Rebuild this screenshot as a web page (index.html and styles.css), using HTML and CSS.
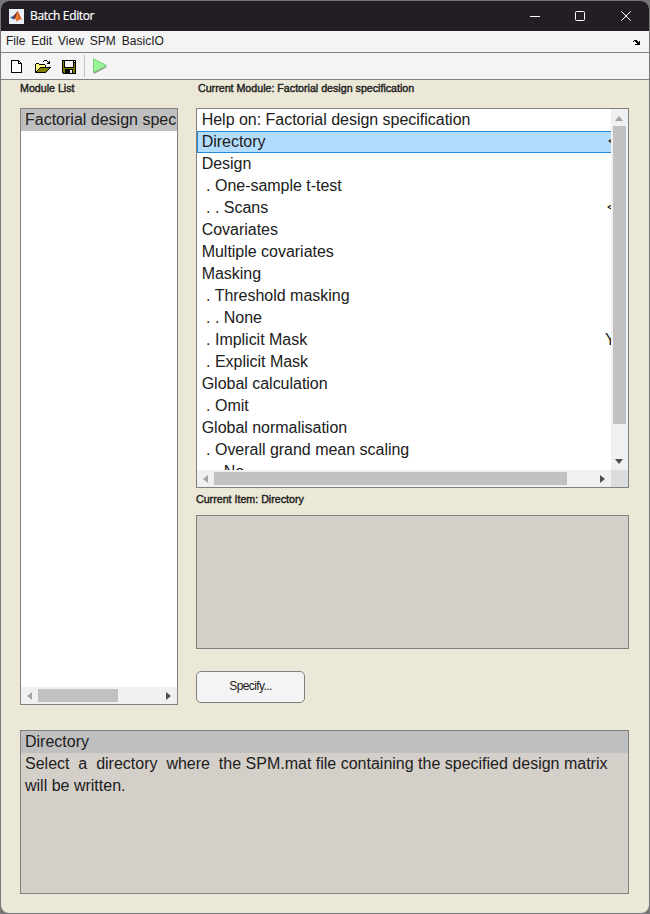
FILE: index.html
```html
<!DOCTYPE html>
<html lang="en">
<head>
<meta charset="utf-8">
<title>Batch Editor</title>
<link rel="stylesheet" href="styles.css">
</head>
<body>
<div class="window">
  <header class="titlebar">
    <svg class="app-icon" width="15" height="15" viewBox="0 0 15 15"><rect width="15" height="15" fill="#e9eff4"/><path d="M1 8.5L5 6.5L7 8L4.5 10.5Z" fill="#34699f"/><path d="M5 6.5L8.5 2L7.5 8L4.5 10.5Z" fill="#762d25"/><path d="M8.5 2C10 3 11 8 13.5 11L11 10L8 12.5L6 9.5Z" fill="#d85d20"/><path d="M8.5 3L9 9L8 12L7.5 9Z" fill="#f1a53a"/></svg>
    <h1 class="title">Batch Editor</h1>
    <div class="controls">
      <svg width="10" height="10" viewBox="0 0 10 10"><path d="M0 5.5H10" stroke="#fff"/></svg>
      <svg class="maximize" width="10" height="10" viewBox="0 0 10 10"><rect x=".5" y=".5" width="9" height="9" rx="1" fill="none" stroke="#fff"/></svg>
      <svg width="10" height="10" viewBox="0 0 10 10"><path d="M.3 .3L9.7 9.7M9.7 .3L.3 9.7" stroke="#fff"/></svg>
    </div>
  </header>
  <nav class="menubar">
    <span>File</span><span>Edit</span><span>View</span><span>SPM</span><span>BasicIO</span>
    <svg class="dock" width="7" height="5" viewBox="0 0 7 5" shape-rendering="crispEdges"><path d="M1 0H4V1H5V2H6V1H7V5H2V4H4V3H3V2H2V1H1V2H0V1H1Z"/></svg>
  </nav>
  <div class="toolbar">
    <svg class="ic-new" width="11" height="13" viewBox="0 0 11 13" shape-rendering="crispEdges"><path d="M0 0H8V1H9V2H10V3H11V13H0Z"/><path d="M1 1H7V4H10V12H1ZM8 2H9V3H8Z" fill="#fff"/></svg>
    <svg class="ic-open" width="16" height="13" viewBox="0 0 16 13" shape-rendering="crispEdges"><path d="M1 4H4V5H10V7H5L1 11Z" fill="#ffff7a"/><path d="M0 4H1V12H0ZM1 3H4V4H1ZM4 4H10V5H4ZM10 5H11V7H10ZM8 1H9V2H8ZM9 0H12V1H9ZM12 1H13V2H12ZM14 1H15V4H12V3H13V2H14Z"/><path d="M5 7H16L11 13H0V12Z"/><path d="M5 8H14L10 12H2Z" fill="#808000"/></svg>
    <svg class="ic-save" width="14" height="14" viewBox="0 0 14 14" shape-rendering="crispEdges"><path d="M0 0H14V14H1V13H0Z"/><path d="M1 1H2V8H12V3H13V13H11V9H3V13H2V12H1Z" fill="#808000"/><path d="M3 1H11V7H3ZM12 1H13V2H12ZM8 10H10V13H8Z" fill="#f4f4f4"/></svg>
    <i class="separator"></i>
    <svg class="ic-run" width="15" height="17" viewBox="0 0 15 17"><path d="M1 1V16L14 9Z" fill="#999b99"/><path d="M.5 .8V14.6L13.5 7.6Z" fill="#98f598" stroke="#78ce78"/></svg>
  </div>
  <main class="workspace">
    <div class="panels">
      <section class="modules">
        <h2>Module List</h2>
        <div class="list module-list">
          <div class="viewport"><div class="row current"><span>Factorial design spec</span></div></div>
          <div class="scroll-x">
            <svg width="5" height="8" viewBox="0 0 5 8"><path d="M5 0V8L0 4Z" fill="#a3a3a3"/></svg>
            <i class="thumb"></i>
            <svg width="5" height="8" viewBox="0 0 5 8"><path d="M0 0V8L5 4Z" fill="#505050"/></svg>
          </div>
        </div>
      </section>
      <section class="details">
        <h2 class="module-heading">Current Module: Factorial design specification</h2>
        <div class="list settings-list">
          <div class="viewport">
            <div class="row"><span>Help on: Factorial design specification</span></div>
            <div class="row selected"><span>Directory</span><b class="value">&lt;-X</b></div>
            <div class="row"><span>Design</span></div>
            <div class="row"><span> . One-sample t-test</span></div>
            <div class="row"><span> . . Scans</span><b class="value scans">&lt;-X</b></div>
            <div class="row"><span>Covariates</span></div>
            <div class="row"><span>Multiple covariates</span></div>
            <div class="row"><span>Masking</span></div>
            <div class="row"><span> . Threshold masking</span></div>
            <div class="row"><span> . . None</span></div>
            <div class="row"><span> . Implicit Mask</span><b class="value yes">Yes</b></div>
            <div class="row"><span> . Explicit Mask</span></div>
            <div class="row"><span>Global calculation</span></div>
            <div class="row"><span> . Omit</span></div>
            <div class="row"><span>Global normalisation</span></div>
            <div class="row"><span> . Overall grand mean scaling</span></div>
            <div class="row"><span> . . No</span></div>
          </div>
          <div class="scroll-y">
            <svg width="8" height="5" viewBox="0 0 8 5"><path d="M0 5H8L4 0Z" fill="#a3a3a3"/></svg>
            <i class="thumb"></i>
            <svg width="8" height="5" viewBox="0 0 8 5"><path d="M0 0H8L4 5Z" fill="#505050"/></svg>
          </div>
          <div class="scroll-x">
            <svg width="5" height="8" viewBox="0 0 5 8"><path d="M5 0V8L0 4Z" fill="#a3a3a3"/></svg>
            <i class="thumb"></i>
            <svg width="5" height="8" viewBox="0 0 5 8"><path d="M0 0V8L5 4Z" fill="#505050"/></svg>
          </div>
          <i class="corner"></i>
        </div>
        <h2 class="item-heading">Current Item: Directory</h2>
        <div class="item-box"></div>
        <button class="specify" type="button">Specify...</button>
      </section>
    </div>
    <section class="help">
      <div class="row current"><span>Directory</span></div>
      <div class="row"><span>Select  a  directory  where  the SPM.mat file containing the specified design matrix</span></div>
      <div class="row"><span>will be written.</span></div>
    </section>
  </main>
</div>
</body>
</html>
```
FILE: styles.css
```css
* { box-sizing: border-box; }
body { margin: 0; width: 650px; height: 914px; overflow: hidden; background: #777; font-family: "Liberation Sans", Arial, sans-serif; color: #202020; }
svg { display: block; flex: none; }
h1, h2 { margin: 0; }
.window { width: 648px; height: 912px; margin: 1px; border-radius: 8px; overflow: hidden; background: #ebe8d7; }
.titlebar { height: 30px; background: #231e26; display: flex; align-items: center; padding: 0 18px 0 8px; }
.title { margin-left: 6px; font: 12px/18px "Open Sans", sans-serif; letter-spacing: -.35px; -webkit-text-stroke: .2px #fff; color: #fff; }
.controls { display: flex; gap: 35px; margin-left: auto; }
.maximize { margin-right: 1px; }
.menubar { height: 22px; display: flex; gap: 6px; padding: 0 9px 0 5px; background: #f4f4f4; border-bottom: 1px solid #808080; font-size: 12px; line-height: 20px; }
.dock { margin: 9px 0 0 auto; }
.toolbar { height: 27px; display: flex; align-items: flex-start; padding-left: 10px; background: #f4f4f4; border-bottom: 1px solid #808080; }
.ic-new { margin-top: 7px; }
.ic-open { margin: 7px 0 0 13px; }
.ic-save { margin: 7px 0 0 11px; }
.separator { width: 1px; height: 22px; margin: 2px 0 0 8px; background: #c3c3c3; }
.ic-run { margin: 5px 0 0 8px; }
.workspace { padding: 0 20px 0 19px; }
.panels { display: flex; gap: 18px; height: 650px; }
.modules { width: 158px; }
.details { width: 433px; }
h2 { height: 28px; font-size: 10.67px; line-height: 17px; font-weight: 400; -webkit-text-stroke: .4px #202020; white-space: pre; }
.list { border: 1px solid #808080; background: #fff; }
.row { height: 22px; padding-left: 5px; font-size: 16px; line-height: 21px; white-space: pre; display: flex; }
.viewport { overflow: hidden; }
.module-list { height: 597px; display: grid; grid-template-rows: 1fr 17px; }
.module-list .row { padding-left: 4px; }
.row.current { background: #bfbfbf; }
.scroll-x { display: flex; align-items: center; background: #f0f0f0; padding: 0 6px; }
.scroll-x svg:last-child { margin-left: auto; }
.scroll-x .thumb { height: 13px; margin-left: 6px; width: 80px; background: #c1c1c1; }
.module-heading { padding-left: 2px; }
.settings-list { height: 380px; display: grid; grid-template-columns: 414px 17px; grid-template-rows: 361px 17px; }
.settings-list .row { padding-left: 4.7px; letter-spacing: -.02px; }
.settings-list .scroll-x .thumb { width: 353px; }
.scroll-y { display: flex; flex-direction: column; align-items: center; background: #f0f0f0; padding: 7px 0 6px; }
.scroll-y svg { margin-right: 1px; }
.scroll-y .thumb { width: 13px; height: 298px; margin-top: 5px; background: #c1c1c1; }
.scroll-y svg:last-child { margin-top: auto; }
.corner { background: #dcdcdc; }
.selected { background: #b3ddff; box-shadow: inset 0 1px #2388d8, inset 0 -1px #2388d8, inset 1px 0 #2388d8; }
.value { font-weight: 400; width: 3px; margin-left: auto; overflow: hidden; font-size: 14px; }
.value.scans { width: 4px; }
.value.yes { width: 6px; font-size: 16px; }
.item-heading { height: 27px; line-height: 23px; }
.item-box { height: 134px; background: #d4cfc9; border: 1px solid #808080; }
.specify { display: block; width: 109px; height: 32px; margin-top: 22px; padding: 0 0 2px; border: 1px solid #808080; border-radius: 5px; background: #f4f4f4; color: #202020; font: 12px "Liberation Sans", Arial, sans-serif; letter-spacing: -.6px; }
.help { height: 164px; background: #d4cfc9; border: 1px solid #808080; }
.help .row { padding-left: 4px; }
```
